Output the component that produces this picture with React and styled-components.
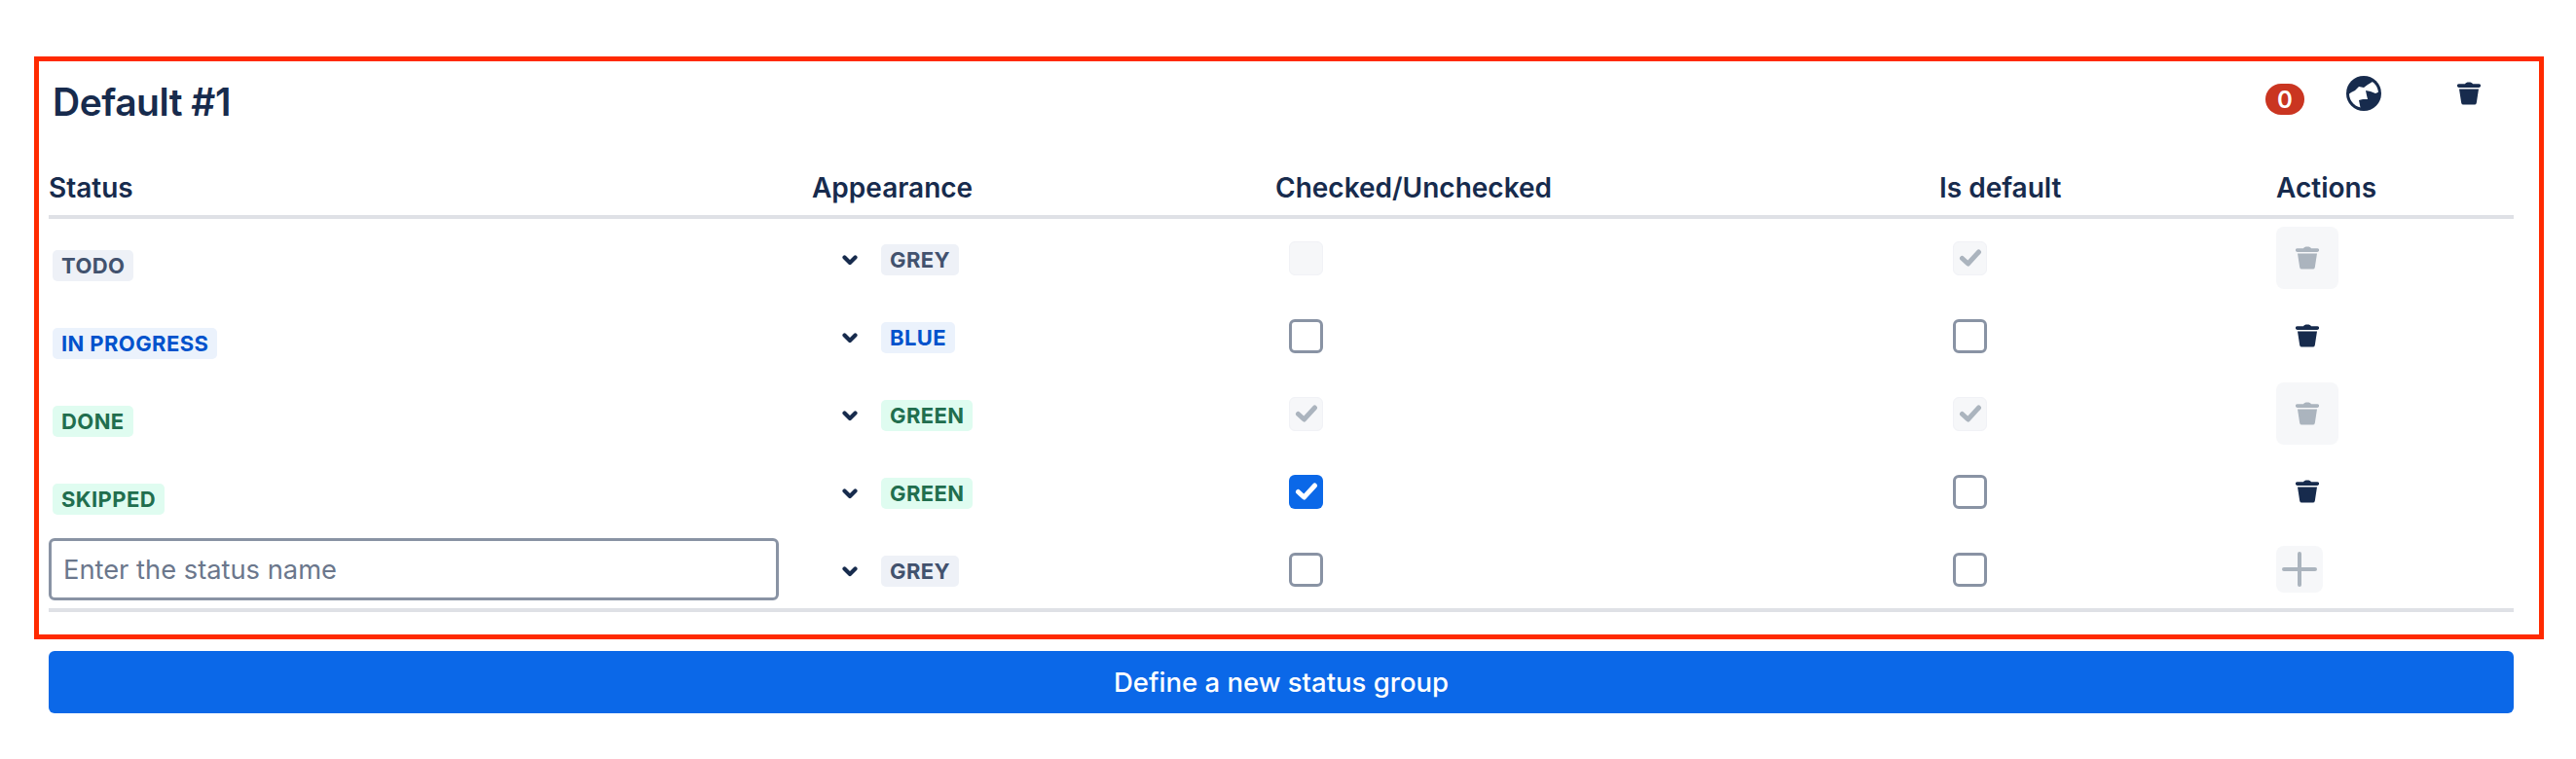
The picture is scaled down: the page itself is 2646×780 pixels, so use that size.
import React from "react";
import styled, { createGlobalStyle } from "styled-components";

const GlobalStyle = createGlobalStyle`
  body {
    margin: 0;
    background: #ffffff;
    font-family: Inter, "Noto Sans", sans-serif;
    color: #172b4d;
  }
`;

const Page = styled.div`
  padding-top: 58px;
  padding-bottom: 40px;
`;

const Frame = styled.section`
  box-sizing: border-box;
  width: 2578px;
  height: 599px;
  margin-left: 35px;
  padding: 0 26px 0 10px;
  border: 5px solid #ff2a00;
`;

const GroupHeader = styled.header`
  display: flex;
  align-items: flex-start;
  height: 115px;
`;

const GroupTitle = styled.h2`
  flex: 1;
  margin: 18px 0 0 4px;
  font-size: 39px;
  line-height: 48px;
  font-weight: 600;
  letter-spacing: -0.5px;
`;

const GroupTools = styled.div`
  display: flex;
  align-items: flex-start;
  margin-top: 15px;
`;

const Count = styled.span`
  display: flex;
  align-items: center;
  justify-content: center;
  width: 40px;
  height: 32px;
  margin-top: 8px;
  border-radius: 16px;
  background: #ca3521;
  color: #ffffff;
  font-size: 24px;
  font-weight: 600;
`;

const GlobeButton = styled.span`
  display: flex;
  margin-left: 43px;
`;

const TopTrash = styled.span`
  display: flex;
  margin: 6px 34px 0 78px;
`;

const Row = styled.div`
  display: grid;
  grid-template-columns: 784px 476px 682px 346px 244px;
  align-items: center;
  height: ${(p) => p.$height || 80}px;
`;

const HeadRow = styled(Row)`
  border-bottom: 4px solid #dfe1e6;
  box-sizing: border-box;
`;

const HeadCell = styled.div`
  font-size: 28px;
  font-weight: 600;
  margin-top: -13px;
`;

const Rows = styled.div`
  border-bottom: 4px solid #dfe1e6;
`;

const Cell = styled.div`
  display: flex;
  align-items: center;
`;

const StatusCell = styled(Cell)`
  padding-left: 4px;
  padding-top: 16px;
`;

const AppearanceCell = styled(Cell)`
  padding-top: 4px;
  padding-left: 31px;
  gap: 24px;
`;

const CheckCell = styled(Cell)`
  padding-left: 14px;
`;

const Lozenge = styled.span`
  display: inline-flex;
  align-items: center;
  height: 32px;
  padding: 0 9px;
  border-radius: 5px;
  font-size: 22px;
  font-weight: 700;
  letter-spacing: 0.4px;
  background: ${(p) => (p.$tone === "blue" ? "#ebf2fc" : p.$tone === "green" ? "#dffcf0" : "#eef1f7")};
  color: ${(p) => (p.$tone === "blue" ? "#0052cc" : p.$tone === "green" ? "#216e4e" : "#42526e")};
`;

const Box = styled.span`
  box-sizing: border-box;
  display: flex;
  align-items: center;
  justify-content: center;
  width: 35px;
  height: 35px;
  border-radius: 6px;
  border: ${(p) => (p.$disabled ? "1px solid #f1f2f6" : p.$checked ? "none" : "3px solid #8993a4")};
  background: ${(p) => (p.$disabled ? "#f6f7f9" : p.$checked ? "#0b68e8" : "#ffffff")};
`;

const ActionButton = styled.span`
  display: flex;
  align-items: center;
  justify-content: center;
  width: ${(p) => p.$size || 64}px;
  height: ${(p) => p.$size || 64}px;
  border-radius: 8px;
  background: ${(p) => (p.$disabled ? "#f6f7f9" : "transparent")};
`;

const NameInput = styled.input`
  box-sizing: border-box;
  width: 750px;
  height: 64px;
  padding: 0 12px;
  border: 3px solid #8993a4;
  border-radius: 6px;
  background: #ffffff;
  font: 400 27.3px Inter, "Noto Sans", sans-serif;
  color: #172b4d;
  outline: none;

  &::placeholder {
    color: #6b778c;
    opacity: 1;
  }
`;

const AddGroup = styled.button`
  display: block;
  width: 2532px;
  height: 64px;
  margin: 12px 0 0 50px;
  border: none;
  border-radius: 6px;
  background: #0b68e8;
  color: #ffffff;
  font: 500 27.5px Inter, "Noto Sans", sans-serif;
`;

function TrashIcon({ color = "#172b4d" }) {
  return (
    <svg width="24" height="24" viewBox="0 0 24 24" fill={color}>
      <path d="M8 2.2C8.6.9 9.8.4 12 .4s3.4.5 4 1.8h6.2a1.9 1.9 0 0 1 0 3.8H1.8a1.9 1.9 0 0 1 0-3.8z" />
      <path d="M2 7.4h20l-2.2 14.3a2.2 2.2 0 0 1-2.2 1.9H6.4a2.2 2.2 0 0 1-2.2-1.9z" />
    </svg>
  );
}

function GlobeIcon() {
  return (
    <svg width="36" height="36" viewBox="0 0 36 36">
      <defs>
        <clipPath id="globe-disc">
          <circle cx="18" cy="18" r="15" />
        </clipPath>
      </defs>
      <circle cx="18" cy="18" r="18" fill="#172b4d" />
      <path
        clipPath="url(#globe-disc)"
        fill="#ffffff"
        d="M1 20 5 17 9 15 13 11 18 12 22 9 27 6 34 8 35 16 30 18 25 16 20 15 21 20 22 24 17 24 13 25 15 35 8 32 2 25Z"
      />
    </svg>
  );
}

function Chevron() {
  return (
    <svg width="16" height="11" viewBox="0 0 16 11">
      <polyline points="2.5,2.5 8,8 13.5,2.5" fill="none" stroke="#172b4d" strokeWidth="4.2" strokeLinecap="round" strokeLinejoin="round" />
    </svg>
  );
}

function Check({ color }) {
  return (
    <svg width="24" height="20" viewBox="0 0 24 20">
      <polyline points="3.5,10.5 9.5,16 20.5,4" fill="none" stroke={color} strokeWidth="5" strokeLinecap="round" strokeLinejoin="round" />
    </svg>
  );
}

function Plus() {
  return (
    <svg width="36" height="36" viewBox="0 0 36 36">
      <path d="M2 18H34M18 2V34" fill="none" stroke="#abb4be" strokeWidth="4" strokeLinecap="round" />
    </svg>
  );
}

function CheckBox({ checked, disabled }) {
  return (
    <Box $checked={checked} $disabled={disabled}>
      {checked && <Check color={disabled ? "#abb4be" : "#ffffff"} />}
    </Box>
  );
}

const statuses = [
  { name: "TODO", tone: "grey", look: "GREY", checked: false, lockChecked: true, isDefault: true, lockDefault: true },
  { name: "IN PROGRESS", tone: "blue", look: "BLUE", checked: false, isDefault: false },
  { name: "DONE", tone: "green", look: "GREEN", checked: true, lockChecked: true, isDefault: true, lockDefault: true },
  { name: "SKIPPED", tone: "green", look: "GREEN", checked: true, isDefault: false },
];

export default function App() {
  return (
    <Page>
      <GlobalStyle />
      <Frame>
        <GroupHeader>
          <GroupTitle>Default #1</GroupTitle>
          <GroupTools>
            <Count>0</Count>
            <GlobeButton>
              <GlobeIcon />
            </GlobeButton>
            <TopTrash>
              <TrashIcon />
            </TopTrash>
          </GroupTools>
        </GroupHeader>
        <HeadRow $height={47}>
          <HeadCell>Status</HeadCell>
          <HeadCell>Appearance</HeadCell>
          <HeadCell>Checked/Unchecked</HeadCell>
          <HeadCell>Is default</HeadCell>
          <HeadCell>Actions</HeadCell>
        </HeadRow>
        <Rows>
          {statuses.map((s) => (
            <Row key={s.name}>
              <StatusCell>
                <Lozenge $tone={s.tone}>{s.name}</Lozenge>
              </StatusCell>
              <AppearanceCell>
                <Chevron />
                <Lozenge $tone={s.tone}>{s.look}</Lozenge>
              </AppearanceCell>
              <CheckCell>
                <CheckBox checked={s.checked} disabled={s.lockChecked} />
              </CheckCell>
              <CheckCell>
                <CheckBox checked={s.isDefault} disabled={s.lockDefault} />
              </CheckCell>
              <Cell>
                <ActionButton $disabled={s.lockDefault}>
                  <TrashIcon color={s.lockDefault ? "#abb4be" : "#172b4d"} />
                </ActionButton>
              </Cell>
            </Row>
          ))}
          <Row>
            <Cell>
              <NameInput placeholder="Enter the status name" />
            </Cell>
            <AppearanceCell>
              <Chevron />
              <Lozenge $tone="grey">GREY</Lozenge>
            </AppearanceCell>
            <CheckCell>
              <CheckBox />
            </CheckCell>
            <CheckCell>
              <CheckBox />
            </CheckCell>
            <Cell>
              <ActionButton $disabled $size={48}>
                <Plus />
              </ActionButton>
            </Cell>
          </Row>
        </Rows>
      </Frame>
      <AddGroup>Define a new status group</AddGroup>
    </Page>
  );
}
